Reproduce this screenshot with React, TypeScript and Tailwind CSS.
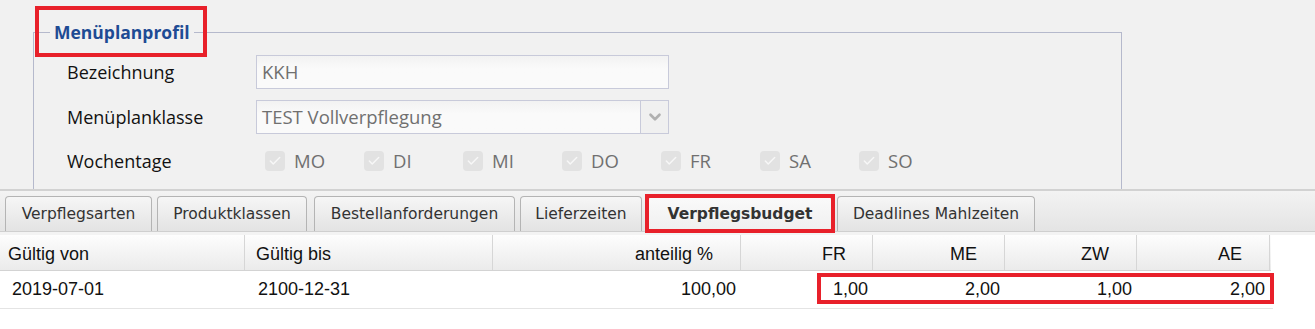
import { Check, ChevronDown } from 'lucide-react';

const days = ['MO', 'DI', 'MI', 'DO', 'FR', 'SA', 'SO'];

const tabs = [
  { label: 'Verpflegsarten', cls: 'ml-[5px] w-[147px]' },
  { label: 'Produktklassen', cls: 'ml-[5px] w-[150px]' },
  { label: 'Bestellanforderungen', cls: 'ml-[7px] w-[201px]' },
  { label: 'Lieferzeiten', cls: 'ml-[5px] w-[122px]' },
  { label: 'Verpflegsbudget', cls: 'ml-[6px] w-[184px]', active: true },
  { label: 'Deadlines Mahlzeiten', cls: 'ml-[5px] w-[198px]' }
];

const columns = [
  { head: 'Gültig von', value: '2019-07-01', cls: 'w-[245px]', headPad: 'pl-[8px]', valPad: 'pl-[12px]' },
  { head: 'Gültig bis', value: '2100-12-31', cls: 'w-[248px]', headPad: 'pl-[11px]', valPad: 'pl-[13px]' },
  { head: 'anteilig %', value: '100,00', cls: 'w-[248px] justify-end', headPad: 'pr-[27px]', valPad: 'pr-[5px]' },
  { head: 'FR', value: '1,00', cls: 'w-[132px] justify-end', headPad: 'pr-[26px]', valPad: 'pr-[5px]' },
  { head: 'ME', value: '2,00', cls: 'w-[132px] justify-end', headPad: 'pr-[27px]', valPad: 'pr-[5px]' },
  { head: 'ZW', value: '1,00', cls: 'w-[132px] justify-end', headPad: 'pr-[27px]', valPad: 'pr-[5px]' },
  { head: 'AE', value: '2,00', cls: 'w-[133px] justify-end', headPad: 'pr-[27px]', valPad: 'pr-[5px]' }
];

const label = "font-['Open_Sans',sans-serif] text-[18px] text-[#111]";
const field = "font-['Open_Sans',sans-serif] text-[18.5px] text-[#707070]";

export default function App() {
  return (
    <div className="relative flex h-[329px] w-[1315px] flex-col overflow-hidden bg-[#f1f1f1]">
      <fieldset className="mt-[20px] ml-[33px] w-[1089px] border border-b-0 border-[#b5b9cc]">
        <legend className="ml-[16px] px-[4px] font-['Open_Sans',sans-serif] text-[17.5px] leading-[24px] font-bold text-[#1e4b94]">
          Menüplanprofil
        </legend>
        <div className="flex flex-col pt-[11px] pb-[18px] pl-[33px]">
          <div className="flex h-[34px] items-center">
            <span className={`w-[189px] ${label}`}>Bezeichnung</span>
            <div className={`flex h-[34px] w-[413px] items-center border border-[#c8cada] bg-linear-to-b from-[#f2f2f2] to-[#fafafa] to-40% pl-[5px] ${field}`}>
              KKH
            </div>
          </div>
          <div className="mt-[11px] flex h-[34px] items-center">
            <span className={`w-[189px] ${label}`}>Menüplanklasse</span>
            <div className="flex h-[34px] w-[413px] border border-[#c8cada] bg-linear-to-b from-[#f2f2f2] to-[#fafafa] to-40%">
              <div className={`flex flex-1 items-center pl-[5px] ${field}`}>TEST Vollverpflegung</div>
              <div className="flex w-[28px] items-center justify-center border-l border-[#c8cada] bg-[#f0f0f0]">
                <ChevronDown size={18} strokeWidth={3.5} className="text-[#b0b0b0]" />
              </div>
            </div>
          </div>
          <div className="mt-[17px] flex h-[20px] items-center">
            <span className={`w-[198px] ${label}`}>Wochentage</span>
            {days.map((d) => (
              <div key={d} className="flex w-[99px] items-center gap-[9px]">
                <span className="flex h-[20px] w-[20px] items-center justify-center rounded-[4px] bg-[#e2e2e2]">
                  <Check size={14} strokeWidth={2.5} className="text-[#f7f7f7]" />
                </span>
                <span className={field}>{d}</span>
              </div>
            ))}
          </div>
        </div>
      </fieldset>

      <div className="absolute top-[6px] left-[35px] h-[51px] w-[172px] border-4 border-[#e8202a]" />

      <div className="flex h-[43px] items-end border-t-2 border-b border-t-[#d2d2d2] border-b-[#cfcfcf] bg-linear-to-b from-[#f3f3f3] to-[#e4e4e4]">
        {tabs.map((t) => (
          <div
            key={t.label}
            className={`relative flex h-[35px] items-center justify-center rounded-t-[4px] border border-b-0 border-[#b4b4b4] pt-[2px] font-['DejaVu_Sans',sans-serif] text-[15.5px] text-[#333] ${t.cls} ${
              t.active ? 'bg-linear-to-b from-[#fafafa] to-[#efefef] font-bold' : 'bg-linear-to-b from-[#f6f6f6] to-[#e3e3e3]'
            }`}
          >
            {t.label}
            {t.active && <div className="absolute -top-[3px] -right-[4px] -bottom-[2px] -left-[4px] border-4 border-[#e8202a]" />}
          </div>
        ))}
      </div>

      <div className="h-[3px] bg-[#f3f3f3]" />

      <div className="relative flex-1 bg-white font-['Liberation_Sans',Arial,sans-serif] text-[18px] text-[#111]">
        <div className="flex h-[36px] w-[1271px] border-b border-[#d3d3d3] bg-linear-to-b from-[#fdfdfd] to-[#ebebeb]">
          {columns.map((c) => (
            <div key={c.head} className={`flex items-center border-r border-[#d6d6d6] pt-[3px] ${c.cls} ${c.headPad}`}>
              {c.head}
            </div>
          ))}
        </div>
        <div className="flex h-[38px] w-[1273px] border-b border-[#e4e4e4]">
          {columns.map((c) => (
            <div key={c.head} className={`flex items-center ${c.cls} ${c.valPad}`}>
              {c.value}
            </div>
          ))}
        </div>
        <div className="absolute top-[38px] left-[817px] h-[31px] w-[457px] border-4 border-[#e8202a]" />
      </div>
    </div>
  );
}
